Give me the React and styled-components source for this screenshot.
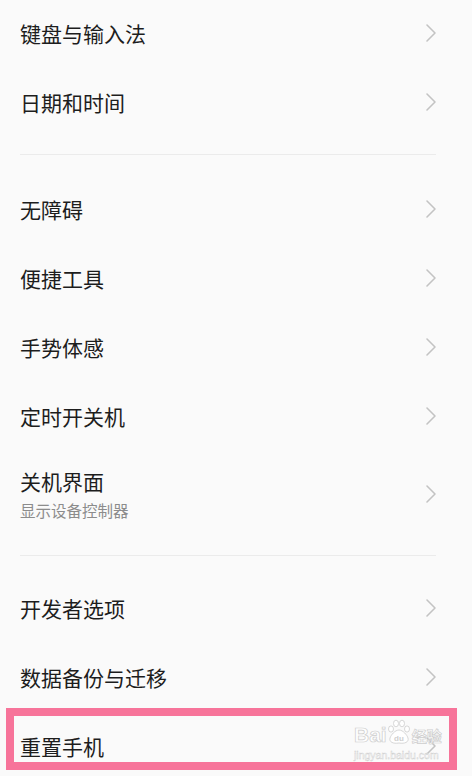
import React from "react";
import styled, { createGlobalStyle } from "styled-components";

const Global = createGlobalStyle`
  html, body { margin: 0; padding: 0; background: #fafafa; }
  body { font-family: "Noto Sans CJK SC", "Noto Sans", sans-serif; }
`;

const Page = styled.div`
  position: relative;
  width: 472px;
  height: 776px;
  overflow: hidden;
  background: #fafafa;
`;

const List = styled.div`
  margin-top: -1px;
`;

const Row = styled.div`
  display: flex;
  align-items: center;
  justify-content: space-between;
  height: ${(p) => (p.$tall ? 87 : 69)}px;
  padding: 0 35px 1px 20px;
  box-sizing: border-box;
`;

const TextCol = styled.div`
  display: flex;
  flex-direction: column;
  gap: 7px;
`;

const Title = styled.div`
  font-size: 21px;
  line-height: 24px;
  color: #1d1d1d;
`;

const Sub = styled.div`
  font-size: 15.5px;
  line-height: 20px;
  color: #8c8c8c;
`;

const Divider = styled.div`
  height: 1px;
  background: #ebebeb;
  margin: 17px 36px ${(p) => p.$after}px 20px;
`;

const Highlight = styled.div`
  position: absolute;
  left: 6px;
  top: 708px;
  width: 451px;
  height: 62px;
  border: 8px solid #f7749a;
  box-sizing: border-box;
`;

const Watermark = styled.div`
  position: absolute;
  left: 354px;
  top: 719px;
  display: flex;
  flex-direction: column;
  align-items: flex-start;
  white-space: nowrap;
  color: rgba(255, 255, 255, 0.92);
  font-family: "Liberation Sans", Arial, sans-serif;
  pointer-events: none;
`;

const MarkTop = styled.div`
  display: flex;
  align-items: flex-end;
  font-size: 21px;
  font-weight: bold;
  line-height: 20px;
  -webkit-text-stroke: 0.7px #cdcdcd;
`;

const MarkCn = styled.span`
  font-family: "Noto Sans CJK SC", sans-serif;
  font-size: 15px;
  line-height: 18px;
  font-weight: bold;
  margin-left: 1px;
`;

const MarkUrl = styled.div`
  font-size: 10.5px;
  line-height: 12px;
  margin-top: 4px;
  -webkit-text-stroke: 0.4px #cdcdcd;
`;

const Chevron = () => (
  <svg width="12" height="20" viewBox="0 0 12 20">
    <polyline
      points="2,2 10,10 2,18"
      fill="none"
      stroke="#c3c3c3"
      strokeWidth="1.6"
      strokeLinecap="round"
      strokeLinejoin="round"
    />
  </svg>
);

const Paw = () => (
  <svg width="24" height="26" viewBox="0 0 24 26">
    <g fill="rgba(255,255,255,0.92)" stroke="#cdcdcd" strokeWidth="0.8">
      <ellipse cx="4" cy="10" rx="2.5" ry="3.1" />
      <ellipse cx="9" cy="4.5" rx="2.5" ry="3.3" />
      <ellipse cx="15" cy="4.5" rx="2.5" ry="3.3" />
      <ellipse cx="20" cy="10" rx="2.5" ry="3.1" />
      <path d="M12 11 C8 11 4 16 3 19 C2 23 6 25 12 24 C18 25 22 23 21 19 C20 16 16 11 12 11 Z" />
    </g>
    <text
      x="12"
      y="22"
      textAnchor="middle"
      fontSize="8"
      fontWeight="bold"
      fontFamily="Liberation Sans, Arial, sans-serif"
      fill="#cfcfcf"
    >
      du
    </text>
  </svg>
);

const Item = ({ title, sub }) => (
  <Row $tall={!!sub}>
    <TextCol>
      <Title>{title}</Title>
      {sub && <Sub>{sub}</Sub>}
    </TextCol>
    <Chevron />
  </Row>
);

export default function App() {
  return (
    <>
      <Global />
      <Page>
        <List>
          <Item title="键盘与输入法" />
          <Item title="日期和时间" />
          <Divider $after={20} />
          <Item title="无障碍" />
          <Item title="便捷工具" />
          <Item title="手势体感" />
          <Item title="定时开关机" />
          <Item title="关机界面" sub="显示设备控制器" />
          <Divider $after={18} />
          <Item title="开发者选项" />
          <Item title="数据备份与迁移" />
          <Item title="重置手机" />
        </List>
        <Highlight />
        <Watermark>
          <MarkTop>
            <span>Bai</span>
            <Paw />
            <MarkCn>经验</MarkCn>
          </MarkTop>
          <MarkUrl>jingyan.baidu.com</MarkUrl>
        </Watermark>
      </Page>
    </>
  );
}
